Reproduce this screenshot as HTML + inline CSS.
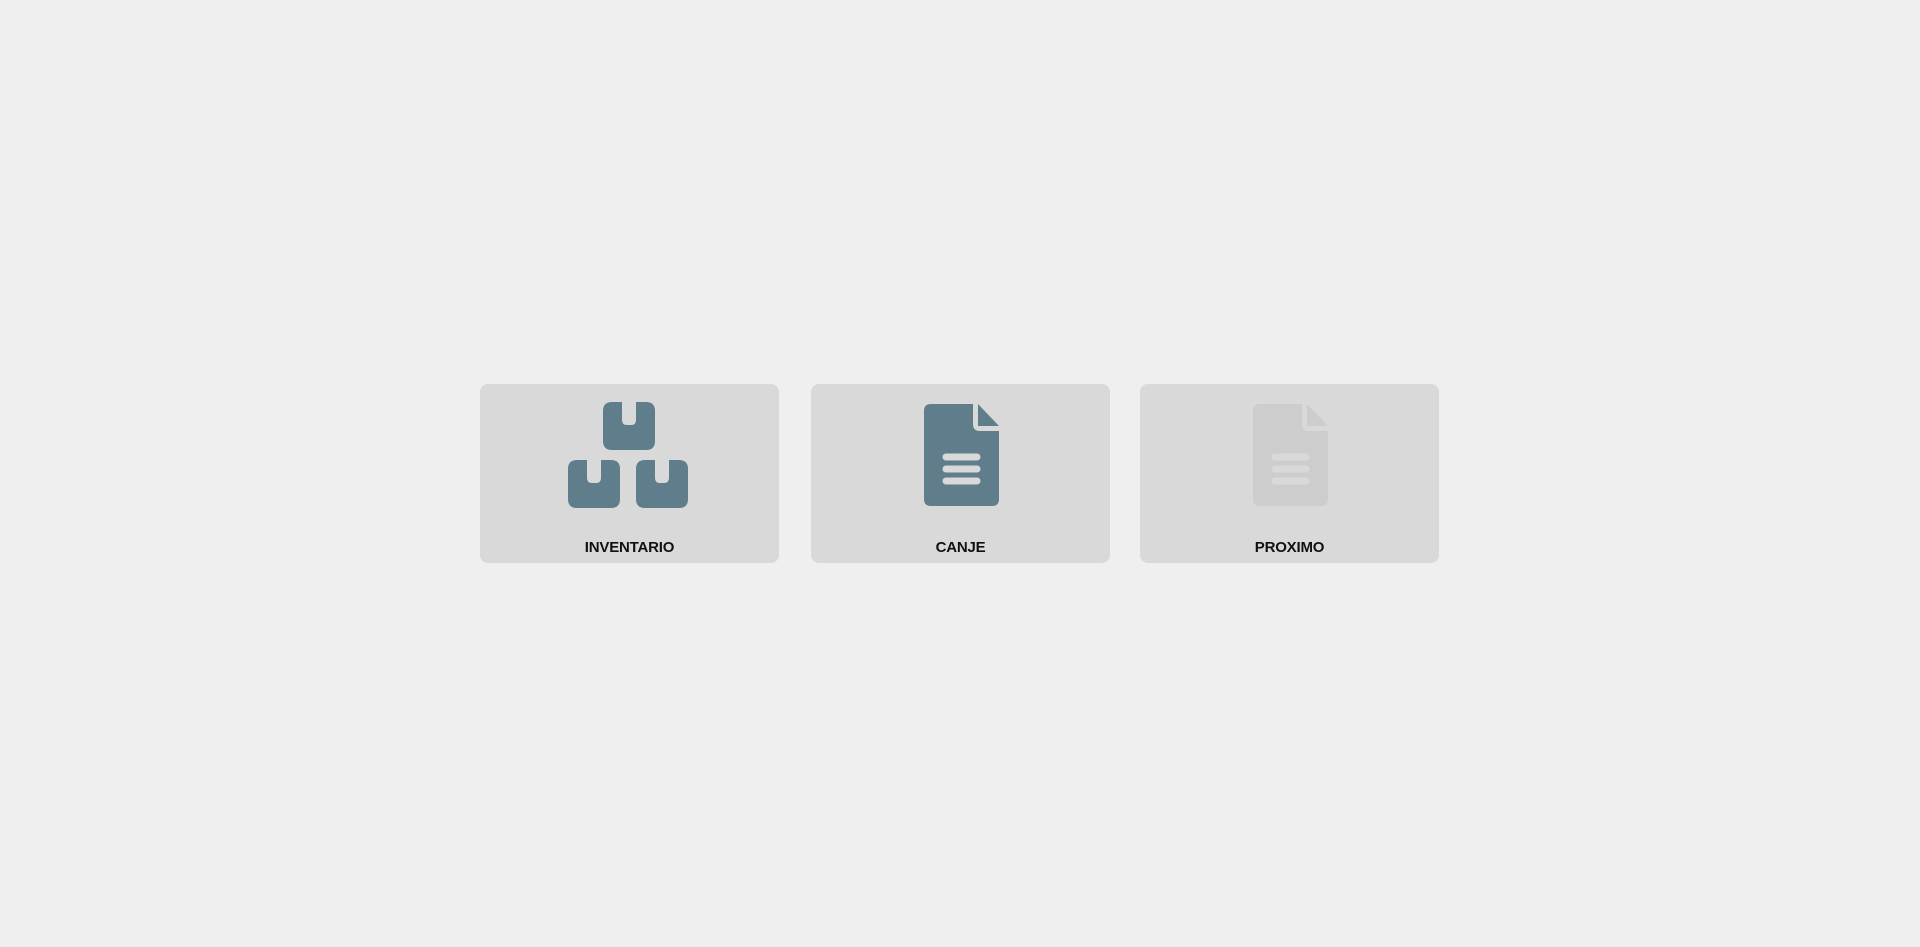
<!DOCTYPE html>
<html><head><style>
html,body{margin:0;padding:0;width:1920px;height:947px;background:#efefef;overflow:hidden;font-family:"Liberation Sans",sans-serif;}
.card{position:absolute;top:384px;width:299px;height:179px;background:#d9d9d9;border-radius:8px;}
.card svg{position:absolute;left:0;top:0;}
.lbl{position:absolute;left:0;right:0;top:155px;text-align:center;font-weight:bold;font-size:15px;color:#111;letter-spacing:-0.2px;}
</style></head><body>
<div class="card" style="left:480px"><svg width="299" height="179" viewBox="0 0 299 179">
<g fill="#607d8b">
<path d="M132 18 h10 v18 q0 5 5 5 h4 q5 0 5-5 v-18 h10 q9 0 9 9 v30 q0 9-9 9 h-34 q-9 0-9-9 v-30 q0-9 9-9z"/>
<path d="M97 76 h10 v18 q0 5 5 5 h4 q5 0 5-5 v-18 h10 q9 0 9 9 v30 q0 9-9 9 h-34 q-9 0-9-9 v-30 q0-9 9-9z"/>
<path d="M165 76 h10 v18 q0 5 5 5 h4 q5 0 5-5 v-18 h10 q9 0 9 9 v30 q0 9-9 9 h-34 q-9 0-9-9 v-30 q0-9 9-9z"/>
</g></svg><div class="lbl">INVENTARIO</div></div>
<div class="card" style="left:811px"><svg width="299" height="179" viewBox="0 0 299 179">
<path fill="#607d8b" d="M120 20 h42 v20 q0 7 7 7 h19 v68 q0 7-7 7 h-61 q-7 0-7-7 v-88 q0-7 7-7z M167 20 l21 22 h-21z"/>
<g stroke="#d9d9d9" stroke-width="7" stroke-linecap="round"><line x1="135" y1="73" x2="166" y2="73"/><line x1="135" y1="85" x2="166" y2="85"/><line x1="135" y1="97" x2="166" y2="97"/></g>
</svg><div class="lbl">CANJE</div></div>
<div class="card" style="left:1140px"><svg width="299" height="179" viewBox="0 0 299 179">
<path fill="#cdcdcd" d="M120 20 h42 v20 q0 7 7 7 h19 v68 q0 7-7 7 h-61 q-7 0-7-7 v-88 q0-7 7-7z M167 20 l21 22 h-21z"/>
<g stroke="#d9d9d9" stroke-width="7" stroke-linecap="round"><line x1="135" y1="73" x2="166" y2="73"/><line x1="135" y1="85" x2="166" y2="85"/><line x1="135" y1="97" x2="166" y2="97"/></g>
</svg><div class="lbl">PROXIMO</div></div>
</body></html>
